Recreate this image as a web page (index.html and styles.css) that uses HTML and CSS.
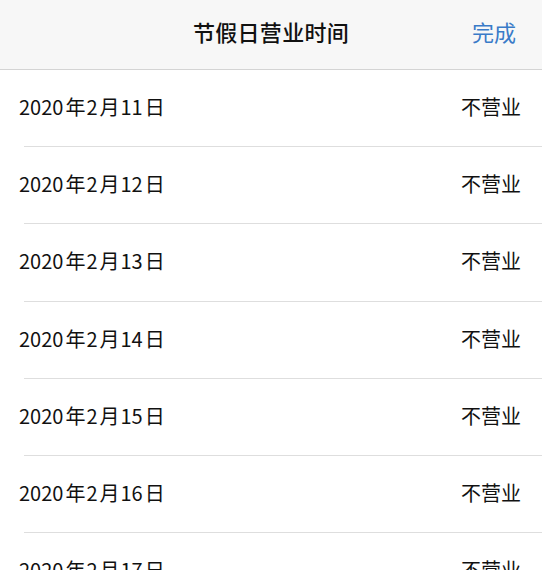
FILE: index.html
```html
<!DOCTYPE html>
<html lang="zh-CN">
<head>
<meta charset="utf-8">
<title>节假日营业时间</title>
<link rel="stylesheet" href="styles.css">
</head>
<body>
<header class="navbar">
  <div class="nav-title">节假日营业时间</div>
  <div class="nav-action">完成</div>
</header>
<ul class="list">
  <li class="row"><span class="date">2020<span class="u">年</span>2<span class="u">月</span>11<span class="u">日</span></span><span class="status">不营业</span></li>
  <li class="row"><span class="date">2020<span class="u">年</span>2<span class="u">月</span>12<span class="u">日</span></span><span class="status">不营业</span></li>
  <li class="row"><span class="date">2020<span class="u">年</span>2<span class="u">月</span>13<span class="u">日</span></span><span class="status">不营业</span></li>
  <li class="row"><span class="date">2020<span class="u">年</span>2<span class="u">月</span>14<span class="u">日</span></span><span class="status">不营业</span></li>
  <li class="row"><span class="date">2020<span class="u">年</span>2<span class="u">月</span>15<span class="u">日</span></span><span class="status">不营业</span></li>
  <li class="row"><span class="date">2020<span class="u">年</span>2<span class="u">月</span>16<span class="u">日</span></span><span class="status">不营业</span></li>
  <li class="row"><span class="date">2020<span class="u">年</span>2<span class="u">月</span>17<span class="u">日</span></span><span class="status">不营业</span></li>
</ul>
</body>
</html>
```
FILE: styles.css
```css
html, body {
  margin: 0;
  padding: 0;
  background: #ffffff;
  overflow: hidden;
}
body {
  font-family: "Noto Sans CJK SC", "Noto Sans", sans-serif;
  color: #111111;
}
.navbar {
  position: relative;
  box-sizing: border-box;
  height: 70px;
  padding-bottom: 8px;
  background: #f7f7f7;
  border-bottom: 1px solid #d4d4d4;
  display: flex;
  align-items: center;
  justify-content: center;
}
.nav-title {
  font-size: 22px;
  font-weight: 500;
  color: #111111;
  letter-spacing: 0.3px;
}
.nav-action {
  position: absolute;
  right: 26px;
  top: 0;
  bottom: 8px;
  display: flex;
  align-items: center;
  font-size: 22px;
  color: #3a7bc8;
}
.list {
  list-style: none;
  margin: 0;
  padding: 0 0 0 24px;
}
.row {
  box-sizing: border-box;
  height: 77.2px;
  padding-bottom: 3px;
  display: flex;
  align-items: center;
  justify-content: space-between;
  padding-right: 21px;
  border-bottom: 1px solid #dedede;
  font-size: 20px;
}
.date {
  margin-left: -5px;
  letter-spacing: 0;
}
.u {
  margin: 0 1px 0 2px;
}
.status {
  letter-spacing: 0;
}
```
